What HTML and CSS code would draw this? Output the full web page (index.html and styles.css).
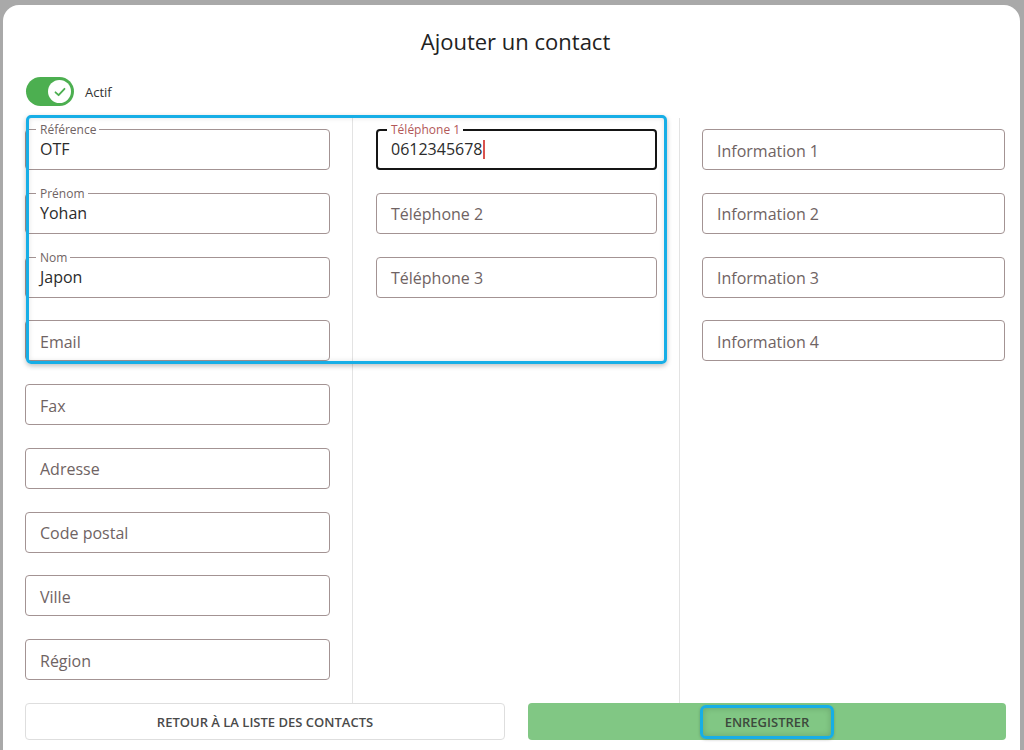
FILE: index.html
```html
<!DOCTYPE html>
<html lang="fr">

<head>
    <meta charset="UTF-8">
    <title>Ajouter un contact</title>
    <link rel="stylesheet" href="styles.css">
</head>

<body>
    <div class="modal">
        <h2 class="title">Ajouter un contact</h2>

        <div class="toggle-row">
            <span class="switch">
                <span class="knob">
                    <svg width="14" height="14" viewBox="0 0 14 14">
                        <path d="M2.5 7.3 L5.6 10.2 L11.5 3.8" fill="none" stroke="#4caf50" stroke-width="1.8" stroke-linecap="round" stroke-linejoin="round"/>
                    </svg>
                </span>
            </span>
            <span class="toggle-label">Actif</span>
        </div>

        <div class="columns">
            <div class="col">
                <div class="field filled"><span class="legend">Référence</span><span class="value">OTF</span></div>
                <div class="field filled"><span class="legend">Prénom</span><span class="value">Yohan</span></div>
                <div class="field filled"><span class="legend">Nom</span><span class="value">Japon</span></div>
                <div class="field"><span class="placeholder">Email</span></div>
                <div class="field"><span class="placeholder">Fax</span></div>
                <div class="field"><span class="placeholder">Adresse</span></div>
                <div class="field"><span class="placeholder">Code postal</span></div>
                <div class="field"><span class="placeholder">Ville</span></div>
                <div class="field"><span class="placeholder">Région</span></div>
            </div>
            <div class="col">
                <div class="field filled focused"><span class="legend">Téléphone 1</span><span class="value">0612345678<span class="caret"></span></span></div>
                <div class="field"><span class="placeholder">Téléphone 2</span></div>
                <div class="field"><span class="placeholder">Téléphone 3</span></div>
            </div>
            <div class="col">
                <div class="field"><span class="placeholder">Information 1</span></div>
                <div class="field"><span class="placeholder">Information 2</span></div>
                <div class="field"><span class="placeholder">Information 3</span></div>
                <div class="field"><span class="placeholder">Information 4</span></div>
            </div>
        </div>

        <div class="actions">
            <button class="btn btn-back">Retour à la liste des contacts</button>
            <button class="btn btn-save"><span class="save-text">Enregistrer</span></button>
        </div>

        <!-- surlignage de la zone active -->
        <div class="highlight"></div>
    </div>
</body>

</html>
```

FILE: styles.css
```css
html,
body {
    margin: 0;
    height: 100%;
    overflow: hidden;
}

body {
    font-family: "Open Sans", Arial, sans-serif;
    background: #a9a9a9;
}

.modal {
    position: relative;
    box-sizing: border-box;
    margin: 5px 0 0 3px;
    width: 1017px;
    height: 760px;
    padding: 0 14px 0 22px;
    background: #fff;
    border-radius: 16px 16px 0 0;
}

.title {
    margin: 0;
    padding-top: 22px;
    font-size: 22px;
    line-height: 28px;
    font-weight: 400;
    color: #222;
    text-align: center;
}

.toggle-row {
    display: flex;
    align-items: center;
    margin-top: 22px;
    padding-left: 1px;
    height: 29px;
}

.switch {
    display: flex;
    align-items: center;
    justify-content: flex-end;
    box-sizing: border-box;
    width: 48px;
    height: 29px;
    padding-right: 3px;
    border-radius: 15px;
    background: #4caf50;
}

.knob {
    display: flex;
    align-items: center;
    justify-content: center;
    width: 23px;
    height: 23px;
    border-radius: 50%;
    background: #fff;
}

.toggle-label {
    margin-left: 11px;
    font-size: 13px;
    font-weight: 500;
    color: #333;
}

.columns {
    display: grid;
    grid-template-columns: 327px 327px 326px;
    margin-top: 12px;
}

.col {
    display: flex;
    flex-direction: column;
    gap: 22.75px;
    padding: 11px 22px 23px 0;
}

.col + .col {
    border-left: 1px solid #e3e3e3;
    padding-left: 23px;
}

.col:last-child {
    padding-left: 22px;
    padding-right: 0;
}

.field {
    position: relative;
    display: flex;
    align-items: center;
    box-sizing: border-box;
    height: 41px;
    padding: 0 14px;
    border: 1px solid #a39393;
    border-radius: 4px;
    font-size: 16px;
}

.placeholder {
    color: #6f6363;
    padding-top: 2px;
}

.value {
    color: #2b2b2b;
    padding-bottom: 1px;
}

.legend {
    position: absolute;
    top: -6px;
    left: 10px;
    padding: 0 3px 0 4px;
    background: #fff;
    font-size: 12px;
    line-height: 12px;
    color: #6f6363;
}

.focused {
    border: 2px solid #151515;
    padding: 0 13px;
}

.focused .legend {
    top: -7px;
    left: 9px;
    color: #b25858;
}

.caret {
    display: inline-block;
    width: 1.5px;
    height: 19px;
    margin-left: 1px;
    vertical-align: -4px;
    background: #d9534f;
}

.actions {
    display: grid;
    grid-template-columns: 480px 478px;
    gap: 23px;
}

.btn {
    height: 37px;
    border-radius: 4px;
    font-family: inherit;
    font-size: 13px;
    font-weight: 600;
    text-transform: uppercase;
    cursor: pointer;
}

.btn-back {
    background: #fff;
    border: 1px solid #dedede;
    color: #4a4a4a;
}

.btn-save {
    display: flex;
    align-items: center;
    justify-content: center;
    background: #81c784;
    border: none;
    color: #3d4a3d;
}

.save-text {
    padding: 5px 22px;
    border: 3px solid #17aee6;
    border-radius: 6px;
    box-shadow: inset 0 0 6px rgba(0, 0, 0, 0.18), 0 1px 3px rgba(0, 0, 0, 0.2);
}

.highlight {
    position: absolute;
    left: 23px;
    top: 110px;
    width: 635px;
    height: 243px;
    border: 3px solid #17aee6;
    border-radius: 5px;
    box-shadow: 0 2px 5px rgba(0, 0, 0, 0.25), inset 0 0 5px rgba(0, 0, 0, 0.12);
    pointer-events: none;
}
```
